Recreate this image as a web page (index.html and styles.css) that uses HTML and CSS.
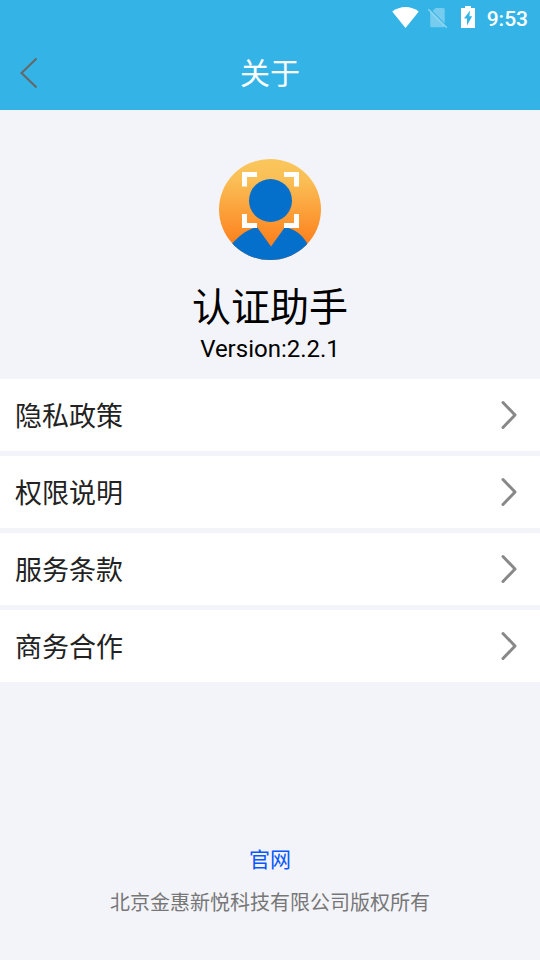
FILE: index.html
```html
<!DOCTYPE html>
<html lang="zh-CN">
<head>
<meta charset="utf-8">
<meta name="viewport" content="width=device-width, initial-scale=1">
<title>关于</title>
<link rel="stylesheet" href="styles.css">
</head>
<body>
<header class="top">
  <div class="status">
    <svg class="wifi" width="28" height="22" viewBox="0 0 28 22" aria-hidden="true"><path d="M0.200 4.600C8-1.400 19-1.400 26.800 4.600L13.500 21z" fill="#fff"/></svg>
    <svg class="sim" width="20" height="22" viewBox="0 0 20 22" aria-hidden="true"><path d="M7.500 1H15.200a1.500 1.500 0 0 1 1.500 1.500V16.200L4.600 4z M2.200 4.700L16.700 19.300a1.500 1.500 0 0 1-1.500 1H3.700a1.500 1.500 0 0 1-1.500-1.500z" fill="#fff" opacity=".32"/><path d="M.4 2.200L18.800 20.800" stroke="#fff" stroke-width="1.600" opacity=".42"/></svg>
    <svg class="battery" width="14" height="24" viewBox="0 0 14 24" aria-hidden="true"><path fill="#fff" fill-rule="evenodd" d="M4 0h6v2h4v20H0V2h4zM9 4.500L3 12.500H6V19.500L11.200 10.300H8.400z"/></svg>
    <time class="clock">9:53</time>
  </div>
  <div class="bar">
    <button class="back" type="button" aria-label="返回">
      <svg width="20" height="32" viewBox="0 0 20 32" aria-hidden="true"><path d="M17.500 1.500L2.500 16L17.500 30.500" fill="none" stroke="#666" stroke-width="2"/></svg>
    </button>
    <h1 class="title">关于</h1>
  </div>
</header>
<main class="content">
  <section class="brand">
    <svg class="logo" width="102" height="102" viewBox="0 0 102 102" aria-hidden="true">
      <defs>
        <linearGradient id="sun" x1="0" y1="0" x2="0" y2="1"><stop offset="0" stop-color="#fac75c"/><stop offset=".2" stop-color="#fabf56"/><stop offset=".8" stop-color="#fd8420"/><stop offset="1" stop-color="#fd7d1c"/></linearGradient>
        <clipPath id="disc"><ellipse cx="51" cy="50.500" rx="51" ry="50.500"/></clipPath>
      </defs>
      <g clip-path="url(#disc)">
        <path d="M0 0h102v102H0z" fill="url(#sun)"/>
        <path d="M10 88C18 79 26 71 38 68L52 87.500L66 68C78 71 85 77 90 88V102H10z" fill="#0570cc"/>
      </g>
      <path d="M25.500 27.500V15.500H38M65 15.500H77.500V27.500M77.500 55V66.500H65M38 66.500H25.500V55" fill="none" stroke="#fff" stroke-width="5"/>
      <circle cx="51.500" cy="41.500" r="21.500" fill="#0570cc"/>
    </svg>
    <h2 class="name">认证助手</h2>
    <p class="version">Version:2.2.1</p>
  </section>
  <nav class="menu">
    <a class="row" href="#privacy"><span class="label">隐私政策</span><svg class="arrow" width="18" height="30" viewBox="0 0 18 30" aria-hidden="true"><path d="M3 2.500L15 15L3 27.500"/></svg></a>
    <a class="row" href="#permissions"><span class="label">权限说明</span><svg class="arrow" width="18" height="30" viewBox="0 0 18 30" aria-hidden="true"><path d="M3 2.500L15 15L3 27.500"/></svg></a>
    <a class="row" href="#terms"><span class="label">服务条款</span><svg class="arrow" width="18" height="30" viewBox="0 0 18 30" aria-hidden="true"><path d="M3 2.500L15 15L3 27.500"/></svg></a>
    <a class="row" href="#business"><span class="label">商务合作</span><svg class="arrow" width="18" height="30" viewBox="0 0 18 30" aria-hidden="true"><path d="M3 2.500L15 15L3 27.500"/></svg></a>
  </nav>
</main>
<footer class="footer">
  <a class="site" href="#site">官网</a>
  <p class="copyright">北京金惠新悦科技有限公司版权所有</p>
</footer>
</body>
</html>
```
FILE: styles.css
```css
* {
  box-sizing: border-box;
  margin: 0;
  padding: 0;
}

body {
  display: flex;
  flex-direction: column;
  min-height: 100vh;
  background: #f3f4f9;
  color: #000;
  font-family: Roboto, "Noto Sans CJK SC", sans-serif;
}

svg {
  display: block;
}

.top {
  background: #34b4e6;
  color: #fff;
}

.status {
  display: flex;
  align-items: center;
  justify-content: flex-end;
  height: 36px;
  padding-right: 12px;
}

.sim {
  margin-left: 8px;
}

.battery {
  margin: 0 12px 0 13px;
}

.clock {
  padding-top: 2px;
  font-size: 21px;
  font-weight: 500;
  line-height: 24px;
}

.bar {
  display: grid;
  grid-template-columns: 1fr auto 1fr;
  align-items: center;
  height: 74px;
}

.back {
  justify-self: start;
  padding: 8px 19px;
  border: 0;
  background: none;
  cursor: pointer;
}

.title {
  padding-top: 2px;
  font-size: 30px;
  font-weight: 400;
  line-height: 44px;
}

.brand {
  display: flex;
  flex-direction: column;
  align-items: center;
  padding: 49px 0 16px;
}

.name {
  margin-top: 20px;
  font-size: 39px;
  font-weight: 400;
  line-height: 54px;
}

.version {
  font-size: 24px;
  line-height: 28px;
}

.menu {
  display: flex;
  flex-direction: column;
  gap: 5px;
}

.row {
  display: flex;
  align-items: center;
  justify-content: space-between;
  height: 72px;
  padding: 0 22px 0 15px;
  background: #fff;
  color: #222;
  font-size: 27px;
  line-height: 40px;
  text-decoration: none;
}

.label {
  padding-top: 3px;
}

.arrow path {
  fill: none;
  stroke: #888;
  stroke-width: 3;
  stroke-linecap: round;
  stroke-linejoin: round;
}

.footer {
  display: flex;
  flex-direction: column;
  align-items: center;
  gap: 13px;
  margin-top: auto;
  padding: 16px 0 42px;
}

.site {
  color: #0a57ff;
  font-size: 21px;
  line-height: 30px;
  text-decoration: none;
}

.copyright {
  color: #777;
  font-size: 20px;
  line-height: 30px;
}
```
